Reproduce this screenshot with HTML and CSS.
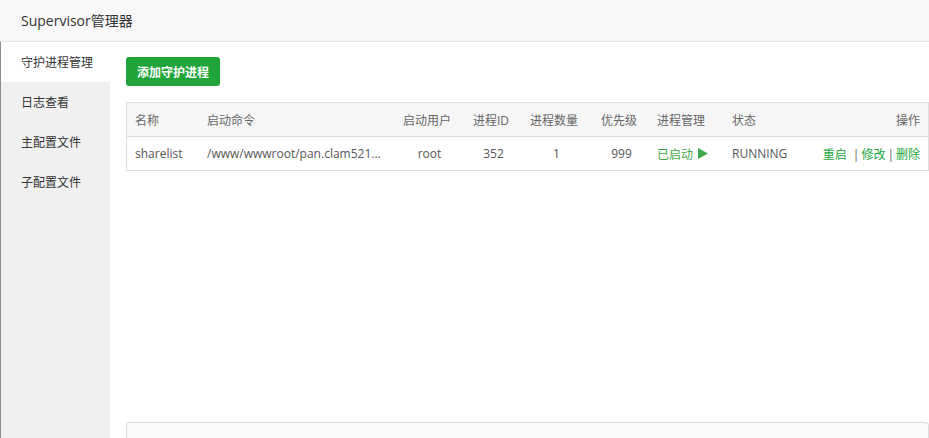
FILE: index.html
```html
<!DOCTYPE html>
<html lang="zh">
<head>
<meta charset="utf-8">
<title>Supervisor管理器</title>
<link rel="stylesheet" href="styles.css">
</head>
<body>
<div class="app">
  <header class="topbar">Supervisor管理器</header>
  <div class="body">
    <nav class="side">
      <div class="side-item active">守护进程管理</div>
      <div class="side-item">日志查看</div>
      <div class="side-item">主配置文件</div>
      <div class="side-item">子配置文件</div>
    </nav>
    <main class="main">
      <div class="toolbar"><button class="btn">添加守护进程</button></div>
      <div class="table">
        <div class="row head">
          <div class="c c1">名称</div>
          <div class="c c2">启动命令</div>
          <div class="c c3">启动用户</div>
          <div class="c c4">进程ID</div>
          <div class="c c5">进程数量</div>
          <div class="c c6">优先级</div>
          <div class="c c7">进程管理</div>
          <div class="c c8">状态</div>
          <div class="c c9">操作</div>
        </div>
        <div class="row data">
          <div class="c c1">sharelist</div>
          <div class="c c2">/www/wwwroot/pan.clam521...</div>
          <div class="c c3">root</div>
          <div class="c c4">352</div>
          <div class="c c5">1</div>
          <div class="c c6">999</div>
          <div class="c c7"><span class="started">已启动<svg class="play" width="10" height="11" viewBox="0 0 10 11"><path d="M0 0 L10 5.5 L0 11 Z" fill="#3fa94b"/></svg></span></div>
          <div class="c c8">RUNNING</div>
          <div class="c c9 ops"><a class="op">重启</a><span class="sep sep1">|</span><a class="op">修改</a><span class="sep">|</span><a class="op">删除</a></div>
        </div>
      </div>
      <div class="spacer"></div>
      <div class="footer-box"></div>
    </main>
  </div>
</div>
</body>
</html>
```

FILE: styles.css
```css
html, body {
  margin: 0;
  padding: 0;
  height: 100%;
  overflow: hidden;
}
body {
  font-family: "Open Sans", "Noto Sans CJK SC", sans-serif;
  font-size: 12px;
  color: #555;
  background: #fff;
}
.app {
  display: flex;
  flex-direction: column;
  height: 438px;
}
.topbar {
  height: 41px;
  line-height: 41px;
  padding-left: 21px;
  background: #f8f8f8;
  border-bottom: 1px solid #e4e4e4;
  font-size: 14px;
  color: #333;
  flex-shrink: 0;
}
.body {
  flex: 1;
  display: flex;
  min-height: 0;
}
.side {
  width: 109px;
  background: #f0f0f0;
  border-left: 1px solid #8c8c8c;
  flex-shrink: 0;
}
.side-item {
  height: 40px;
  line-height: 41px;
  padding-left: 20px;
  color: #333;
  font-size: 12px;
}
.side-item.active {
  background: #fff;
}
.main {
  flex: 1;
  padding: 15px 0 0 16px;
  display: flex;
  flex-direction: column;
  min-width: 0;
}
.toolbar {
  height: 29px;
  margin-bottom: 16px;
}
.btn {
  height: 29px;
  width: 94px;
  padding: 0;
  border: none;
  border-radius: 3px;
  background: #20a53a;
  color: #fff;
  font-family: "Open Sans", "Noto Sans CJK SC", sans-serif;
  font-size: 12px;
  font-weight: 600;
}
.table {
  border: 1px solid #dddddd;
}
.row {
  display: grid;
  grid-template-columns: 71px 199px 60px 68px 58px 72px 75px 70px 1fr;
  height: 33px;
  align-items: center;
}
.row.head {
  background: #f6f6f6;
  border-bottom: 1px solid #dddddd;
  color: #666;
}
.c {
  white-space: nowrap;
  overflow: hidden;
}
.c1 { padding-left: 8px; }
.c2 { padding-left: 9px; }
.c3, .c4, .c5, .c6 { text-align: center; }
.data .c3, .data .c4, .data .c5, .data .c6 { padding-left: 5px; }
.c7, .c8 { padding-left: 2px; }
.c9 { text-align: right; padding-right: 8px; }
.started {
  color: #3fa94b;
  display: inline-flex;
  align-items: center;
}
.play {
  margin-left: 5px;
}
.op {
  color: #20a53a;
  text-decoration: none;
}
.sep {
  margin: 0 2px;
  color: #666;
}
.sep1 {
  margin-left: 6px;
}
.spacer {
  flex: 1;
}
.footer-box {
  height: 15px;
  background: #fafafa;
  border: 1px solid #dcdcdc;
  border-bottom: none;
  border-radius: 4px 4px 0 0;
  box-shadow: 0 0 3px rgba(0,0,0,0.05);
}
```
